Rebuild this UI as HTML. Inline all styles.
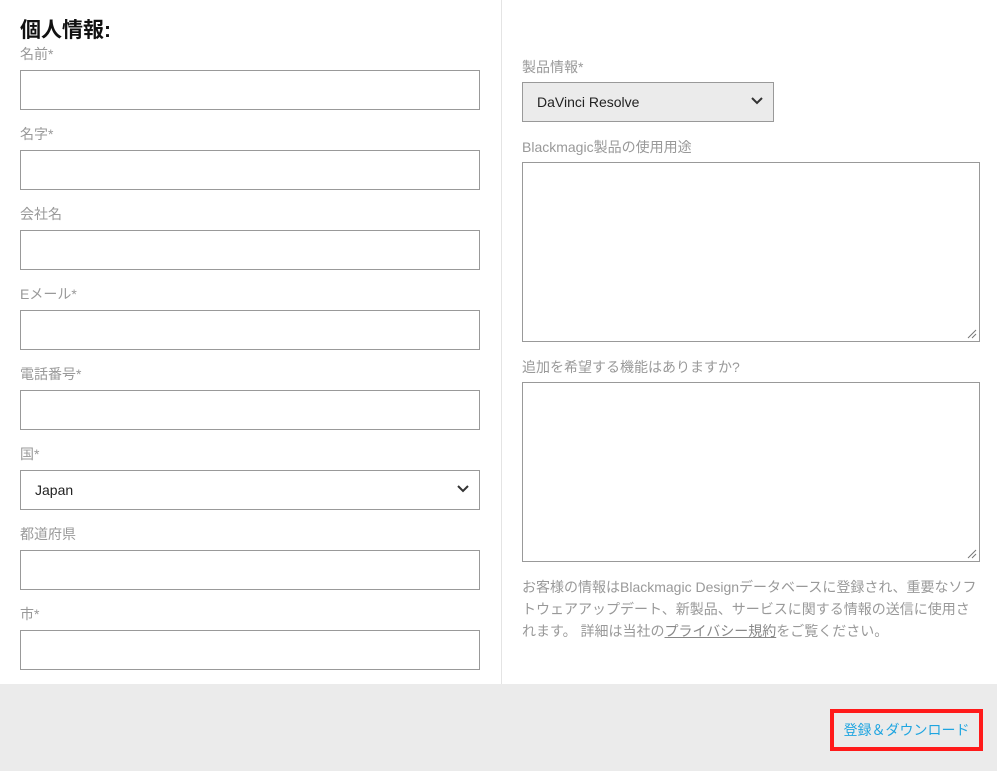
<!DOCTYPE html>
<html><head><meta charset="utf-8"><style>
*{box-sizing:border-box;margin:0;padding:0}
body{width:997px;height:771px;background:#fff;font-family:"Liberation Sans","Noto Sans CJK JP",sans-serif;position:relative;overflow:hidden}
.a{position:absolute}
.lab{position:absolute;font-size:14px;color:#999;line-height:16px}
.in{position:absolute;border:1px solid #999;background:#fff;height:40px}
.sel{position:absolute;border:1px solid #999;height:40px;font-size:14px;color:#222;padding-left:14px;line-height:38px}
.chev{position:absolute;right:10px;top:14px}
.ta{position:absolute;border:1px solid #999;background:#fff}
.grip{position:absolute;right:2px;bottom:2px}
</style></head><body>
<div class="a" style="left:501px;top:0;width:1px;height:684px;background:#e4e4e4"></div>
<div class="a" style="left:20px;top:18px;font-size:21px;font-weight:bold;color:#111;line-height:26px">個人情報:</div>

<div class="lab" style="left:20px;top:46px">名前*</div><div class="in" style="left:20px;top:70px;width:460px"></div>
<div class="lab" style="left:20px;top:126px">名字*</div><div class="in" style="left:20px;top:150px;width:460px"></div>
<div class="lab" style="left:20px;top:206px">会社名</div><div class="in" style="left:20px;top:230px;width:460px"></div>
<div class="lab" style="left:20px;top:286px">Eメール*</div><div class="in" style="left:20px;top:310px;width:460px"></div>
<div class="lab" style="left:20px;top:366px">電話番号*</div><div class="in" style="left:20px;top:390px;width:460px"></div>
<div class="lab" style="left:20px;top:446px">国*</div>
<div class="sel" style="left:20px;top:470px;width:460px;background:#fff">Japan<svg class="chev" width="12" height="8" viewBox="0 0 12 8"><path d="M1 1l5 5 5-5" stroke="#333" stroke-width="2" fill="none"/></svg></div>
<div class="lab" style="left:20px;top:526px">都道府県</div><div class="in" style="left:20px;top:550px;width:460px"></div>
<div class="lab" style="left:20px;top:606px">市*</div><div class="in" style="left:20px;top:630px;width:460px"></div>

<div class="lab" style="left:522px;top:59px">製品情報*</div>
<div class="sel" style="left:522px;top:82px;width:252px;background:#ebebeb">DaVinci Resolve<svg class="chev" width="12" height="8" viewBox="0 0 12 8"><path d="M1 1l5 5 5-5" stroke="#333" stroke-width="2" fill="none"/></svg></div>
<div class="lab" style="left:522px;top:139px">Blackmagic製品の使用用途</div>
<div class="ta" style="left:522px;top:162px;width:458px;height:180px"><svg class="grip" width="10" height="10"><path d="M9 1L1 9M9 5L5 9" stroke="#777"/></svg></div>
<div class="lab" style="left:522px;top:359px">追加を希望する機能はありますか?</div>
<div class="ta" style="left:522px;top:382px;width:458px;height:180px"><svg class="grip" width="10" height="10"><path d="M9 1L1 9M9 5L5 9" stroke="#777"/></svg></div>
<div class="a" style="left:522px;top:576px;width:460px;font-size:14px;color:#999;line-height:22px">お客様の情報はBlackmagic Designデータベースに登録され、重要なソフトウェアアップデート、新製品、サービスに関する情報の送信に使用されます。 詳細は当社の<span style="text-decoration:underline;color:#888">プライバシー規約</span>をご覧ください。</div>

<div class="a" style="left:0;top:684px;width:997px;height:87px;background:#ebebeb"></div>
<div class="a" style="left:830px;top:709px;width:153px;height:42px;border:4px solid #ff1a1a;font-size:14px;color:#1fa5e0;text-align:center;line-height:34px">登録＆ダウンロード</div>
</body></html>
